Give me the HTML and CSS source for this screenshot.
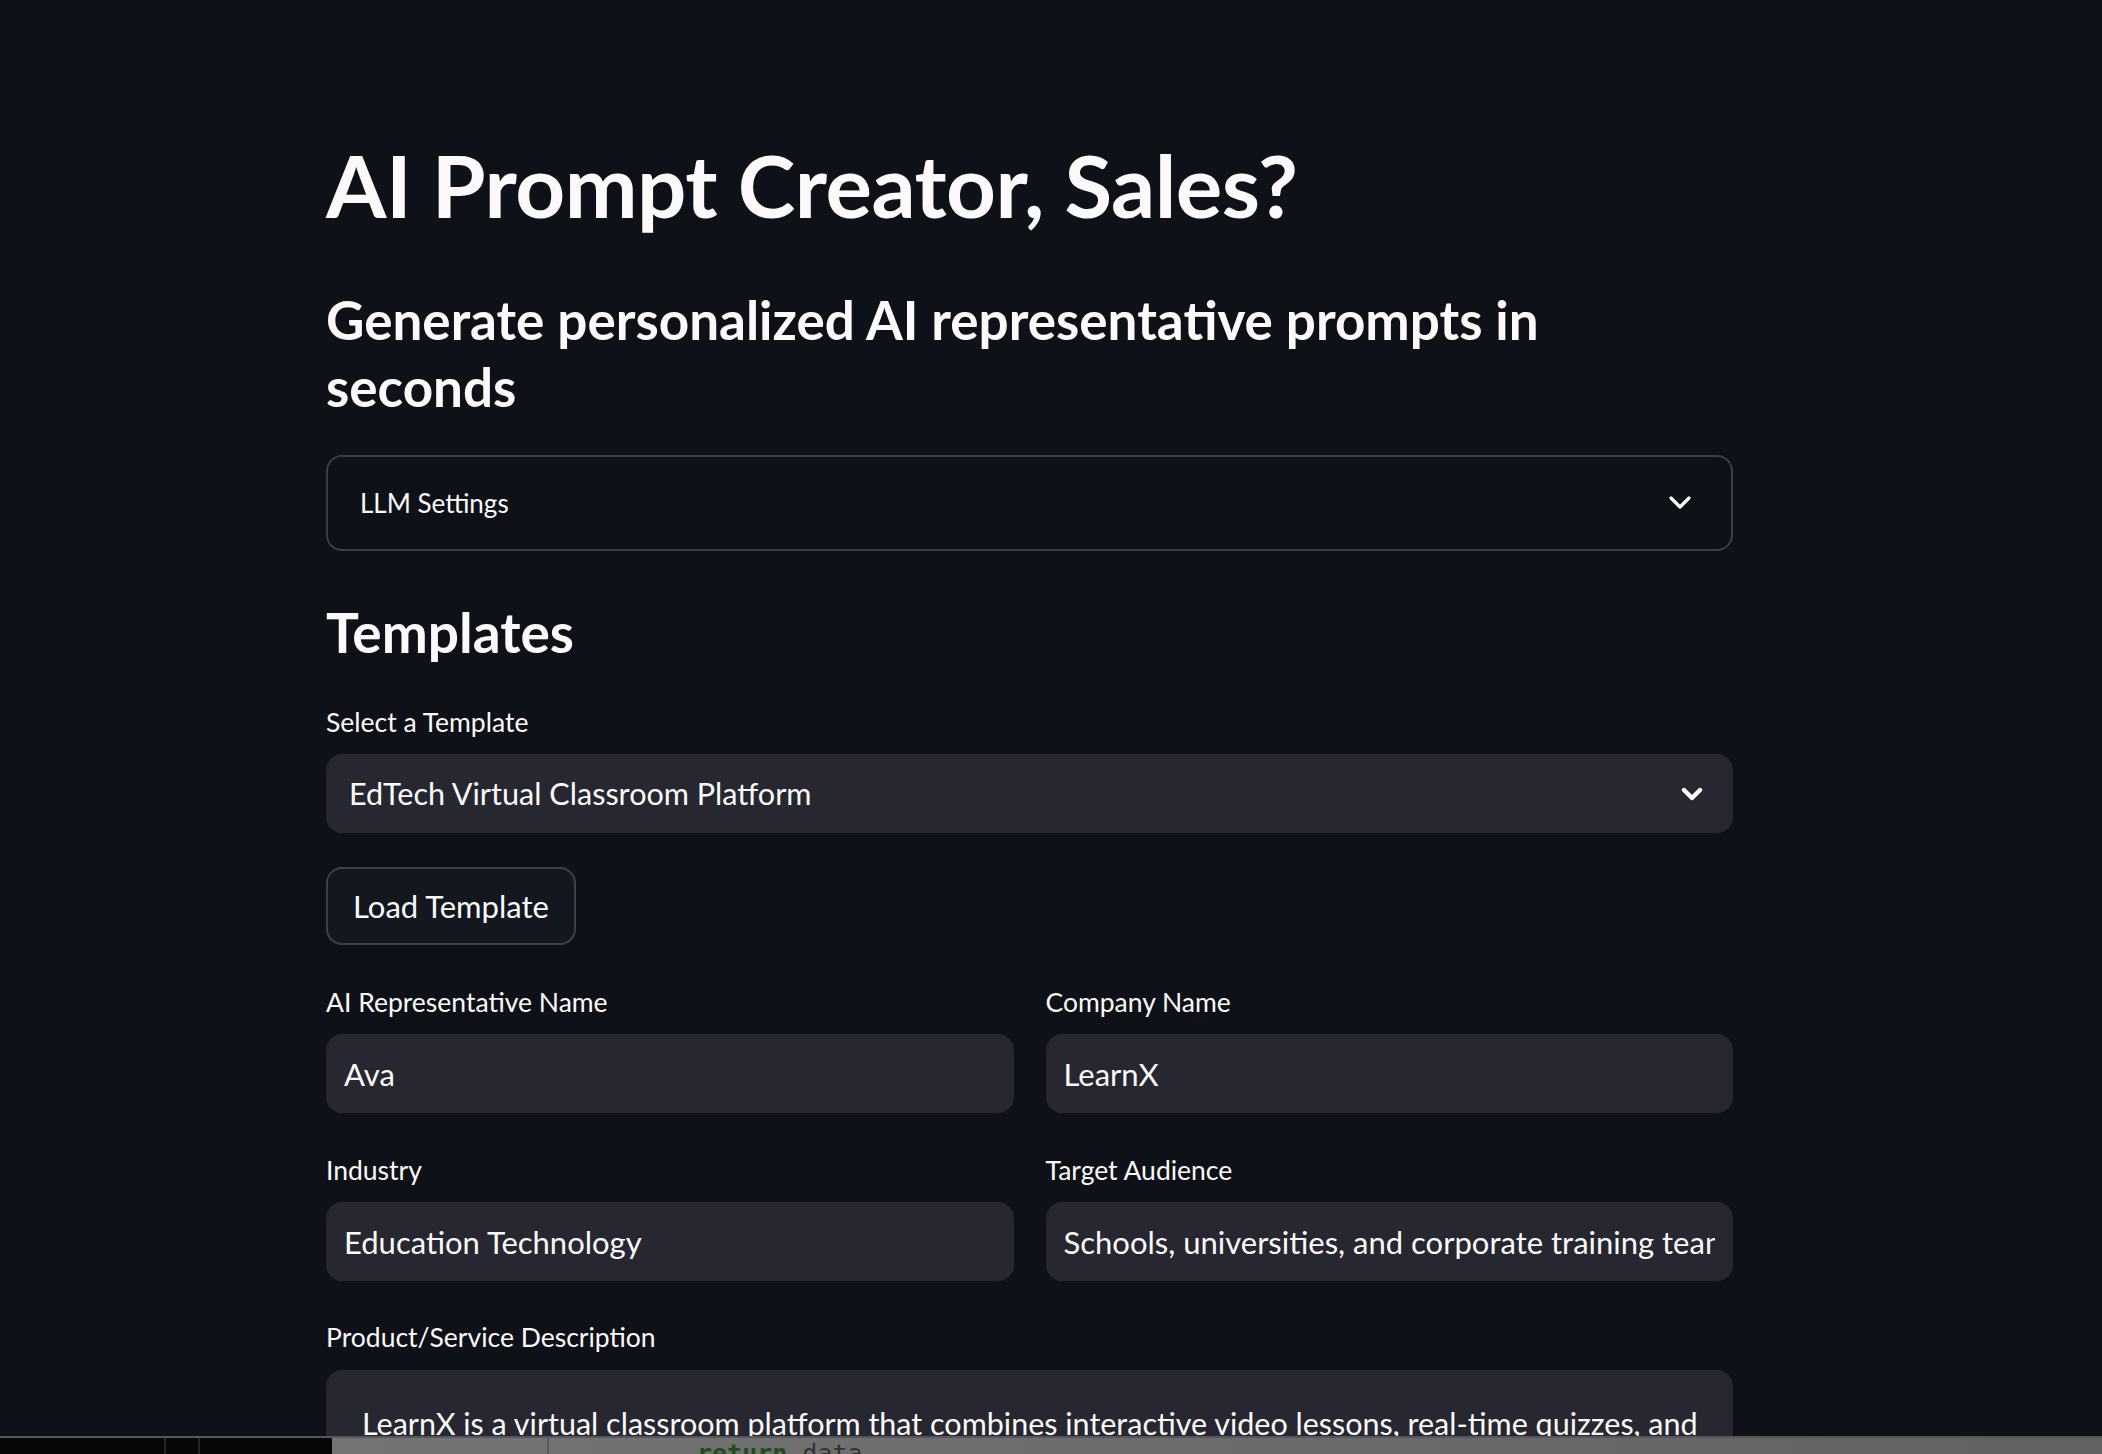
FILE: index.html
```html
<!DOCTYPE html>
<html lang="en">
<head>
<meta charset="utf-8">
<title>AI Prompt Creator, Sales?</title>
<link rel="stylesheet" href="styles.css">
</head>
<body>
<div class="app">
  <main class="block">
    <h1 class="title">AI Prompt Creator, Sales?</h1>
    <h3 class="subtitle">Generate personalized AI representative prompts in<br>seconds</h3>

    <div class="expander">
      <span class="expander-label">LLM Settings</span>
      <svg class="chev-thin" width="22" height="14" viewBox="0 0 22 14"><path d="M2 2 L11 11 L20 2" fill="none" stroke="#fafafa" stroke-width="3.2" stroke-linecap="round" stroke-linejoin="round"/></svg>
    </div>

    <h3 class="section">Templates</h3>

    <div class="field field-first">
      <label class="label">Select a Template</label>
      <div class="select">
        <span>EdTech Virtual Classroom Platform</span>
        <svg class="chev-bold" width="22" height="14" viewBox="0 0 22 14"><path d="M3 3 L11 11 L19 3" fill="none" stroke="#fafafa" stroke-width="4.4" stroke-linecap="round" stroke-linejoin="round"/></svg>
      </div>
    </div>

    <button class="btn">Load Template</button>

    <div class="cols">
      <div class="field">
        <label class="label">AI Representative Name</label>
        <div class="input"><span class="value">Ava</span></div>
      </div>
      <div class="field">
        <label class="label">Company Name</label>
        <div class="input"><span class="value">LearnX</span></div>
      </div>
      <div class="field">
        <label class="label">Industry</label>
        <div class="input"><span class="value">Education Technology</span></div>
      </div>
      <div class="field">
        <label class="label">Target Audience</label>
        <div class="input"><span class="value">Schools, universities, and corporate training teams</span></div>
      </div>
    </div>

    <div class="field field-desc">
      <label class="label">Product/Service Description</label>
      <div class="textarea">LearnX is a virtual classroom platform that combines interactive video lessons, real-time quizzes, and</div>
    </div>
  </main>
</div>

<div class="taskbar">
  <div class="tb-left">
    <span class="tb-sep"></span>
    <span class="tb-sep"></span>
  </div>
  <div class="tb-right">
    <span class="tb-divider"></span>
    <span class="tb-code"><span class="kw">return</span> data</span>
  </div>
</div>
</body>
</html>
```

FILE: styles.css
```css
html, body {
  margin: 0;
  padding: 0;
  height: 100%;
  overflow: hidden;
  background: #0e1117;
}

body {
  color: #fafafa;
  font-family: "Lato", "Noto Sans", sans-serif;
}

.app {
  padding-left: 326px;
  padding-top: 135px;
}

.block {
  width: 1407px;
  display: flex;
  flex-direction: column;
}

.title {
  margin: 0;
  font-size: 87px;
  line-height: 100px;
  font-weight: 700;
  letter-spacing: -0.5px;
}

.subtitle {
  margin: 51px 0 0;
  font-size: 53px;
  line-height: 67px;
  font-weight: 700;
}

.expander {
  margin-top: 35px;
  height: 92px;
  border: 2px solid #3b3e45;
  border-radius: 16px;
  display: flex;
  align-items: center;
  justify-content: space-between;
  padding: 0 40px 0 32px;
}

.expander-label {
  font-size: 26px;
}

.section {
  margin: 46px 0 0;
  font-size: 55px;
  line-height: 70px;
  font-weight: 700;
}

.field {
  display: flex;
  flex-direction: column;
  min-width: 0;
}

.label {
  display: block;
  font-size: 26.5px;
  line-height: 40px;
  height: 40px;
  margin-top: 37px;
  margin-bottom: 12px;
}

.field-first .label {
  margin-top: 35px;
}

.field-desc .label {
  margin-top: 36px;
  margin-bottom: 13px;
}

.select {
  height: 79px;
  background: #262730;
  border-radius: 16px;
  display: flex;
  align-items: center;
  justify-content: space-between;
  padding: 0 30px 0 23px;
  font-size: 30.6px;
}

.btn {
  align-self: flex-start;
  margin-top: 34px;
  width: 250px;
  height: 78px;
  background: #131720;
  color: #fafafa;
  border: 2px solid #3d4048;
  border-radius: 16px;
  font-family: inherit;
  font-size: 31px;
  padding: 0;
}

.cols {
  display: grid;
  grid-template-columns: minmax(0, 1fr) minmax(0, 1fr);
  column-gap: 32px;
}

.input {
  height: 79px;
  background: #262730;
  border-radius: 16px;
  display: flex;
  align-items: center;
  padding: 0 18px;
  font-size: 31px;
  min-width: 0;
}

.value {
  display: block;
  white-space: nowrap;
  overflow: hidden;
  min-width: 0;
}

.textarea {
  height: 300px;
  background: #262730;
  border-radius: 16px;
  padding: 29px 36px 32px;
  font-size: 30.5px;
  line-height: 48px;
  white-space: nowrap;
}

.taskbar {
  position: fixed;
  left: 0;
  right: 0;
  bottom: 0;
  height: 16px;
  border-top: 2px solid #55565b;
  display: flex;
  overflow: hidden;
}

.tb-left {
  width: 332px;
  background: #060709;
  position: relative;
}

.tb-sep {
  position: absolute;
  top: 0;
  bottom: 0;
  width: 2px;
  background: #25262a;
}

.tb-sep:first-child { left: 164px; }
.tb-sep:nth-child(2) { left: 198px; }

.tb-right {
  flex: 1;
  background: linear-gradient(90deg, #747474, #6a6a6a 60%, #626262);
  position: relative;
}

.tb-divider {
  position: absolute;
  left: 215px;
  top: 0;
  bottom: 0;
  width: 2px;
  background: #5a5a5a;
}

.tb-code {
  position: absolute;
  left: 365px;
  top: 1px;
  font-family: "DejaVu Sans Mono", monospace;
  font-size: 25px;
  line-height: 30px;
  color: #333;
  white-space: pre;
}

.kw {
  color: #1c4f1c;
  font-weight: 700;
}
```
